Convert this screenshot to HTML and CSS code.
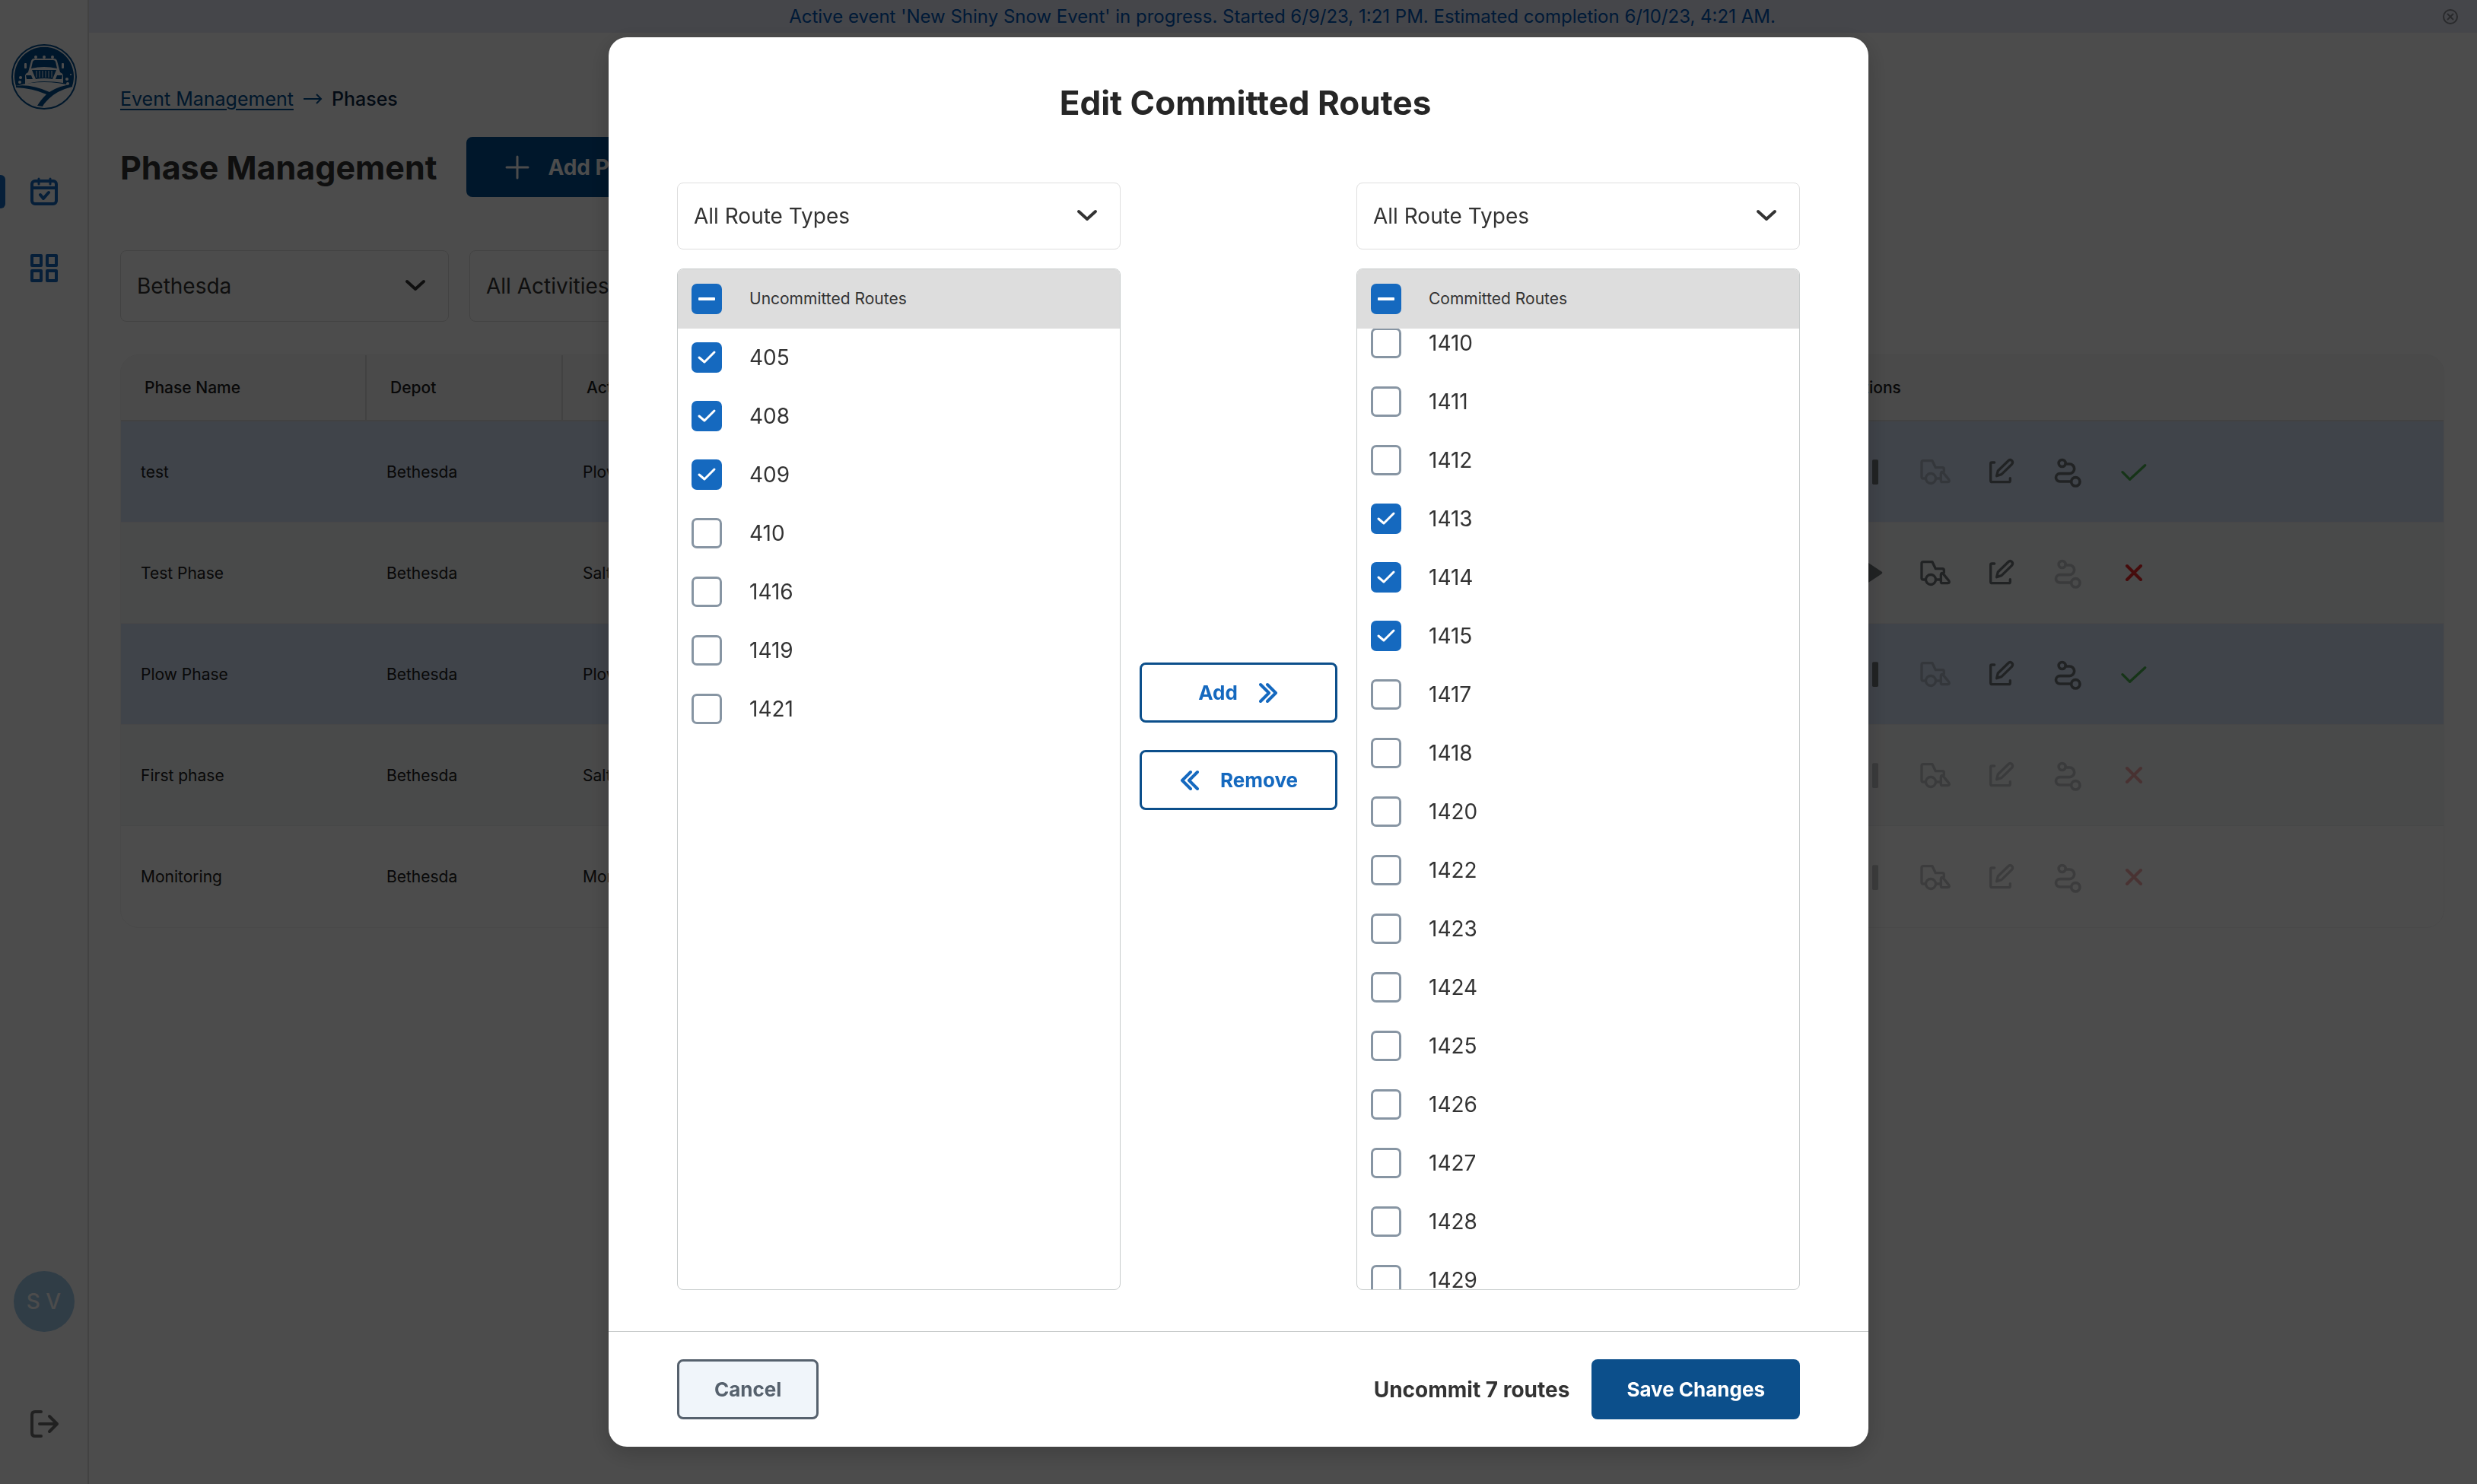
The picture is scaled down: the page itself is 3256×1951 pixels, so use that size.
FILE: index.html
```html
<!DOCTYPE html>
<html lang="en">
<head>
<meta charset="utf-8">
<title>Phase Management</title>
<link rel="stylesheet" href="styles.css">
</head>
<body>
<svg class="sprite" aria-hidden="true">
  <symbol id="pause" viewBox="-21 107 144 144"><rect x="15" y="132" width="24" height="98" rx="5" fill="currentColor"/><rect x="63" y="132" width="24" height="98" rx="5" fill="currentColor"/></symbol>
  <symbol id="play" viewBox="-21 107 144 144"><path d="M24 133Q24 125 31 129L99 174Q107 179 99 184L31 229Q24 233 24 225Z" fill="currentColor"/></symbol>
  <symbol id="truck" viewBox="241 107 144 144"><g fill="none" stroke="currentColor" stroke-width="10" stroke-linejoin="round" stroke-linecap="round"><path d="M272 206H265Q259 206 259 200V142Q259 136 265 136H301L314 163H341Q347 163 347 169V178M317 206H334"/><circle cx="295" cy="206" r="19.500"/><path d="M335 186Q336 178 342 181L366 210Q371 219 362 220H341Q335 220 335 214Z"/></g></symbol>
  <symbol id="edit" viewBox="504 107 144 144"><g fill="none" stroke="currentColor" stroke-width="10" stroke-linejoin="round" stroke-linecap="round"><path d="M548 143H538Q533 143 533 148V214Q533 220 539 220H605Q610 220 610 214V205"/><path d="M557 196L562 176L602 137Q610 129 617 136Q623 143 616 151L576 190Z"/></g></symbol>
  <symbol id="route" viewBox="756 107 144 144"><g fill="none" stroke="currentColor" stroke-width="11" stroke-linecap="round"><circle cx="806" cy="146" r="13.500"/><circle cx="859" cy="219" r="17"/><path d="M820 149H835A19 19 0 0 1 835 187H797A15.500 15.500 0 0 0 797 218H841"/></g></symbol>
  <symbol id="check" viewBox="1019 107 144 144"><path d="M1046 181L1075 210L1135 154" fill="none" stroke="currentColor" stroke-width="10" stroke-linejoin="round" stroke-linecap="round"/></symbol>
  <symbol id="cross" viewBox="0 0 144 144"><path d="M45 45L99 99M99 45L45 99" fill="none" stroke="currentColor" stroke-width="12" stroke-linecap="round"/></symbol>
  <symbol id="chevron" viewBox="0 0 28 16"><path d="M3 3L14 13L25 3" fill="none" stroke="currentColor" stroke-width="4" stroke-linecap="round" stroke-linejoin="round"/></symbol>
</svg>

<div class="app">
  <aside class="sidebar">
    <svg class="logo" viewBox="0 0 86 86">
      <circle cx="43" cy="43" r="42" fill="none" stroke="#004d8f" stroke-width="2"/>
      <path d="M6 55A39 39 0 1 1 80 55Q62 50 43 50Q24 50 6 55Z" fill="#004d8f"/>
      <path d="M18 49V41Q19 38 22 37L26 22Q27 19 30 19H56Q59 19 60 22L64 37Q67 38 68 41V51Q56 49 43 49Q30 49 18 53Z" fill="#fff"/>
      <path d="M26 32L28 23Q29 21 31 21H55Q57 21 58 23L60 32Q43 28 26 32Z" fill="#004d8f"/>
      <path d="M27 34H59L54 46Q43 44 32 46Z" fill="#004d8f"/>
      <path d="M33 35V44M37 35V44M41 35V44M45 35V44M49 35V44M53 35V44" stroke="#fff" stroke-width="1"/>
      <path d="M19 41H26L28 46H20ZM67 41H60L58 46H66Z" fill="#004d8f"/>
      <g fill="#fff"><circle cx="32" cy="17" r="2"/><circle cx="43" cy="17" r="2"/><circle cx="54" cy="17" r="2"/><rect x="17" y="25" width="3" height="7" rx="1"/><rect x="66" y="25" width="3" height="7" rx="1"/><circle cx="12" cy="44" r="2"/><circle cx="11" cy="50" r="2"/><circle cx="73" cy="46" r="2"/><circle cx="78" cy="40" r="1"/><circle cx="74" cy="52" r="2"/></g>
      <path d="M6 55Q25 52 50 63Q64 54 80 53V56Q60 61 49 72Q42 79 41 82L34 81Q38 74 46 66Q28 58 6 57Z" fill="#004d8f"/>
    </svg>
    <nav class="nav">
      <a class="nav-item active" href="#" aria-current="page"><svg width="40" height="40" viewBox="0 0 40 40"><g fill="none" stroke="currentColor" stroke-width="4" stroke-linecap="round" stroke-linejoin="round"><rect x="4" y="6" width="32" height="30" rx="4"/><path d="M5 15H35" stroke-linecap="butt"/><path d="M13 3V10M28 3V10" stroke-width="3"/><path d="M15 24L19 29L26 21"/></g></svg></a>
      <a class="nav-item" href="#"><svg width="40" height="40" viewBox="0 0 40 40"><g fill="none" stroke="currentColor" stroke-width="4" stroke-linejoin="round"><rect x="4" y="4" width="12" height="13"/><rect x="24" y="4" width="12" height="13"/><rect x="4" y="24" width="12" height="13"/><rect x="24" y="24" width="12" height="13"/></g></svg></a>
    </nav>
    <div class="account">
      <span class="avatar">S V</span>
      <button class="logout" type="button"><svg width="40" height="40" viewBox="0 0 40 40"><path d="M16 4H8Q4 4 4 8V32Q4 36 8 36H16M14 20H36M27 10L37 20L27 30" fill="none" stroke="currentColor" stroke-width="4" stroke-linecap="round" stroke-linejoin="round"/></svg></button>
    </div>
  </aside>

  <div class="page">
    <div class="banner">
      <p>Active event 'New Shiny Snow Event' in progress. Started 6/9/23, 1:21 PM. Estimated completion 6/10/23, 4:21 AM.</p>
      <button class="banner-close" type="button"><svg width="22" height="22" viewBox="0 0 22 22"><g fill="none" stroke="currentColor" stroke-width="2"><circle cx="11" cy="11" r="9"/><path d="M7 7L15 15M15 7L7 15"/></g></svg></button>
    </div>
    <main class="content">
      <nav class="crumbs"><a href="#">Event Management</a><svg width="26" height="16" viewBox="0 0 26 16"><path d="M1 8H24M18 2L24 8L18 14" fill="none" stroke="currentColor" stroke-width="2"/></svg><span>Phases</span></nav>
      <div class="heading">
        <h1>Phase Management</h1>
        <button class="btn btn-primary btn-add" type="button"><svg width="32" height="32" viewBox="0 0 32 32"><path d="M16 2V30M2 16H30" stroke="currentColor" stroke-width="3" stroke-linecap="round"/></svg>Add Phase</button>
      </div>
      <div class="filters">
        <div class="select"><select aria-label="Depot"><option>Bethesda</option></select><svg class="chevron"><use href="#chevron"/></svg></div>
        <div class="select"><select aria-label="Activity"><option>All Activities</option></select><svg class="chevron"><use href="#chevron"/></svg></div>
      </div>
      <table class="phases">
        <colgroup><col class="c-name"><col class="c-depot"><col><col class="c-actions"></colgroup>
        <thead><tr><th>Phase Name</th><th>Depot</th><th>Activity</th><th>Actions</th></tr></thead>
        <tbody>
          <tr class="running"><td>test</td><td>Bethesda</td><td>Plow</td><td><div class="actions">
            <button type="button"><svg><use href="#pause"/></svg></button><button type="button" disabled><svg><use href="#truck"/></svg></button><button type="button"><svg><use href="#edit"/></svg></button><button type="button"><svg><use href="#route"/></svg></button><button class="ok" type="button"><svg><use href="#check"/></svg></button></div></td></tr>
          <tr class="idle"><td>Test Phase</td><td>Bethesda</td><td>Salt</td><td><div class="actions">
            <button type="button"><svg><use href="#play"/></svg></button><button type="button"><svg><use href="#truck"/></svg></button><button type="button"><svg><use href="#edit"/></svg></button><button type="button" disabled><svg><use href="#route"/></svg></button><button class="bad" type="button"><svg><use href="#cross"/></svg></button></div></td></tr>
          <tr class="running"><td>Plow Phase</td><td>Bethesda</td><td>Plow</td><td><div class="actions">
            <button type="button"><svg><use href="#pause"/></svg></button><button type="button" disabled><svg><use href="#truck"/></svg></button><button type="button"><svg><use href="#edit"/></svg></button><button type="button"><svg><use href="#route"/></svg></button><button class="ok" type="button"><svg><use href="#check"/></svg></button></div></td></tr>
          <tr class="idle"><td>First phase</td><td>Bethesda</td><td>Salt</td><td><div class="actions">
            <button type="button" disabled><svg><use href="#pause"/></svg></button><button type="button" disabled><svg><use href="#truck"/></svg></button><button type="button" disabled><svg><use href="#edit"/></svg></button><button type="button" disabled><svg><use href="#route"/></svg></button><button class="bad" type="button" disabled><svg><use href="#cross"/></svg></button></div></td></tr>
          <tr><td>Monitoring</td><td>Bethesda</td><td>Monitoring</td><td><div class="actions">
            <button type="button" disabled><svg><use href="#pause"/></svg></button><button type="button" disabled><svg><use href="#truck"/></svg></button><button type="button" disabled><svg><use href="#edit"/></svg></button><button type="button" disabled><svg><use href="#route"/></svg></button><button class="bad" type="button" disabled><svg><use href="#cross"/></svg></button></div></td></tr>
        </tbody>
      </table>
    </main>
  </div>
</div>

<div class="backdrop">
  <section class="modal" role="dialog" aria-modal="true" aria-labelledby="modal-title">
    <h2 id="modal-title">Edit Committed Routes</h2>
    <div class="transfer">
      <div class="column">
        <div class="select"><select aria-label="All Route Types"><option>All Route Types</option></select><svg class="chevron"><use href="#chevron"/></svg></div>
        <div class="routes">
          <label class="route-row route-head"><input type="checkbox" class="partial">Uncommitted Routes</label>
          <ul>
            <li><label class="route-row"><input type="checkbox" checked>405</label></li>
            <li><label class="route-row"><input type="checkbox" checked>408</label></li>
            <li><label class="route-row"><input type="checkbox" checked>409</label></li>
            <li><label class="route-row"><input type="checkbox">410</label></li>
            <li><label class="route-row"><input type="checkbox">1416</label></li>
            <li><label class="route-row"><input type="checkbox">1419</label></li>
            <li><label class="route-row"><input type="checkbox">1421</label></li>
          </ul>
        </div>
      </div>
      <div class="moves">
        <button class="btn btn-outline" type="button">Add<svg width="26" height="28" viewBox="0 0 26 28"><path d="M2 3L13 14L2 25M11 3L22 14L11 25" fill="none" stroke="currentColor" stroke-width="4" stroke-linecap="round" stroke-linejoin="round"/></svg></button>
        <button class="btn btn-outline" type="button"><svg width="26" height="28" viewBox="0 0 26 28"><path d="M24 3L13 14L24 25M15 3L4 14L15 25" fill="none" stroke="currentColor" stroke-width="4" stroke-linecap="round" stroke-linejoin="round"/></svg>Remove</button>
      </div>
      <div class="column">
        <div class="select"><select aria-label="All Route Types"><option>All Route Types</option></select><svg class="chevron"><use href="#chevron"/></svg></div>
        <div class="routes">
          <label class="route-row route-head"><input type="checkbox" class="partial">Committed Routes</label>
          <ul id="committed">
            <li><label class="route-row"><input type="checkbox">1410</label></li>
            <li><label class="route-row"><input type="checkbox">1411</label></li>
            <li><label class="route-row"><input type="checkbox">1412</label></li>
            <li><label class="route-row"><input type="checkbox" checked>1413</label></li>
            <li><label class="route-row"><input type="checkbox" checked>1414</label></li>
            <li><label class="route-row"><input type="checkbox" checked>1415</label></li>
            <li><label class="route-row"><input type="checkbox">1417</label></li>
            <li><label class="route-row"><input type="checkbox">1418</label></li>
            <li><label class="route-row"><input type="checkbox">1420</label></li>
            <li><label class="route-row"><input type="checkbox">1422</label></li>
            <li><label class="route-row"><input type="checkbox">1423</label></li>
            <li><label class="route-row"><input type="checkbox">1424</label></li>
            <li><label class="route-row"><input type="checkbox">1425</label></li>
            <li><label class="route-row"><input type="checkbox">1426</label></li>
            <li><label class="route-row"><input type="checkbox">1427</label></li>
            <li><label class="route-row"><input type="checkbox">1428</label></li>
            <li><label class="route-row"><input type="checkbox">1429</label></li>
          </ul>
        </div>
      </div>
    </div>
    <footer class="modal-footer">
      <button class="btn btn-muted" type="button">Cancel</button>
      <strong>Uncommit 7 routes</strong>
      <button class="btn btn-primary" type="button">Save Changes</button>
    </footer>
  </section>
</div>
<script src="app.js"></script>
</body>
</html>
```
FILE: styles.css
```css
*, *::before, *::after { box-sizing: border-box; }

:root {
  --navy: #0c4f8b;
  --blue: #1569bf;
  --text: #333333;
}

body {
  margin: 0;
  font-family: Inter, "Liberation Sans", sans-serif;
  font-size: 28px;
  color: var(--text);
  background: #ffffff;
}

h1, h2, p, ul { margin: 0; padding: 0; }
ul { list-style: none; }
button, select, input { font: inherit; color: inherit; margin: 0; }
button { border: 0; padding: 0; background: none; }
svg { display: block; flex: none; }
.sprite { position: absolute; width: 0; height: 0; }

.app { display: flex; min-height: 100vh; }

/* Sidebar */
.sidebar {
  flex: none;
  width: 117px;
  padding: 58px 0 59px;
  border-right: 2px solid #dcdcdc;
  display: flex;
  flex-direction: column;
  align-items: center;
}
.logo { width: 86px; height: 86px; }
.nav { width: 100%; margin-top: 86px; display: flex; flex-direction: column; gap: 56px; }
.nav-item {
  position: relative;
  height: 44px;
  display: flex;
  align-items: center;
  justify-content: center;
  color: var(--blue);
}
.nav-item.active::before {
  content: "";
  position: absolute;
  left: 0;
  top: 0;
  width: 7px;
  height: 44px;
  border-radius: 0 6px 6px 0;
  background: var(--blue);
}
.account { margin-top: auto; display: flex; flex-direction: column; align-items: center; gap: 101px; }
.avatar {
  width: 80px;
  height: 80px;
  border-radius: 50%;
  display: flex;
  align-items: center;
  justify-content: center;
  background: #a0cbec;
  color: #ffffff;
  font-weight: 500;
}
.logout { color: #707070; }

/* Page */
.page { flex: 1; min-width: 0; }
.banner {
  height: 43px;
  padding: 0 24px;
  display: flex;
  align-items: center;
  background: #e6e9f7;
  color: #0057b8;
  font-size: 24px;
}
.banner p { flex: 1; padding-left: 20px; text-align: center; }
.banner-close { color: #8a8c94; }
.content { padding: 71px 43px 0 41px; }
.crumbs { display: flex; align-items: center; gap: 12px; height: 32px; font-size: 25px; color: #0b2545; }
.crumbs a { color: #004d8f; text-underline-offset: 4px; text-decoration-thickness: 2px; }
.crumbs svg { color: #004d8f; }
.crumbs span { font-weight: 500; }
.heading { display: flex; align-items: center; gap: 39px; margin-top: 34px; }
h1 { font-size: 43px; line-height: 48px; }
.filters { display: flex; gap: 27px; margin-top: 70px; }
.filters .select { width: 432px; height: 94px; }

/* Shared controls */
.btn {
  height: 79px;
  border-radius: 8px;
  display: flex;
  align-items: center;
  justify-content: center;
  font-size: 26px;
  font-weight: 700;
  white-space: nowrap;
}
.btn-primary { padding: 0 46px; background: var(--navy); color: #ffffff; }
.btn-add { gap: 24px; padding: 0 51px; background: #004d8f; font-size: 28px; }
.btn-outline { border: 3px solid var(--navy); color: var(--blue); gap: 28px; }
.btn-muted { padding: 0 46px; border: 3px solid #56616d; background: #f0f5fa; color: #56616d; }

.select { position: relative; }
.select select {
  width: 100%;
  height: 100%;
  padding: 0 64px 0 21px;
  appearance: none;
  border: 1px solid #dedede;
  border-radius: 8px;
  background: #ffffff;
}
.chevron { position: absolute; right: 30px; top: 50%; width: 28px; height: 16px; margin-top: -9px; pointer-events: none; }

/* Phase table */
.phases {
  width: 100%;
  margin-top: 43px;
  table-layout: fixed;
  border-collapse: separate;
  border-spacing: 0;
  border: 1px solid #f4f4f4;
  border-radius: 24px;
  overflow: hidden;
  font-size: 21px;
  color: #202020;
}
.c-name { width: 323px; }
.c-depot { width: 258px; }
.c-actions { width: 823px; }
.phases th {
  height: 87px;
  padding: 0 31px;
  text-align: left;
  font-weight: 500;
  background: #f7f7f7;
  border-bottom: 2px solid #dcdcdc;
  border-right: 2px solid #dcdcdc;
}
.phases th:last-child { padding-left: 34px; border-right: 0; }
.phases td { height: 133px; padding: 0 26px; border-bottom: 1px solid #efeff0; }
.running td { background: #d6e3f8; }
.idle td { background: #f6f7f9; }
.phases td:last-child { padding: 0 20px 0 44px; }
.phases tr:last-child td { border-bottom: 0; }
.actions { display: flex; gap: 39px; color: #717679; }
.actions svg { width: 48px; height: 48px; }
.actions button:disabled { opacity: 0.38; }
.actions .ok { color: #4cb050; }
.actions .bad { color: #e92828; }

/* Modal */
.backdrop {
  position: fixed;
  inset: 0;
  display: flex;
  align-items: center;
  justify-content: center;
  background: rgba(0, 0, 0, 0.7);
}
.modal {
  width: 100%;
  max-width: 1656px;
  height: 95vh;
  display: flex;
  flex-direction: column;
  border-radius: 24px;
  background: #ffffff;
  box-shadow: 0 8px 32px rgba(0, 0, 0, 0.2);
}
h2 { padding: 58px 72px 77px 90px; font-size: 44px; line-height: 56px; text-align: center; color: #262626; }
.transfer { flex: 1; min-height: 0; padding: 0 90px 54px; display: flex; gap: 25px; }
.column { flex: 1; min-width: 0; display: flex; flex-direction: column; gap: 25px; }
.column .select { height: 88px; }
.routes {
  flex: 1;
  min-height: 0;
  display: flex;
  flex-direction: column;
  border: 1px solid #c8cccc;
  border-radius: 8px;
  overflow: hidden;
}
.routes ul { flex: 1; min-height: 0; overflow-y: auto; scrollbar-width: none; }
.route-row { display: flex; align-items: center; gap: 36px; height: 77px; padding: 0 18px; }
.route-head { flex: none; height: 78px; background: #dddddd; font-size: 21px; }
input[type="checkbox"] {
  flex: none;
  appearance: none;
  width: 40px;
  height: 40px;
  border: 3px solid #8795a3;
  border-radius: 7px;
  background: #ffffff center / 40px 40px no-repeat;
}
input[type="checkbox"]:checked {
  border: 0;
  background-color: var(--blue);
  background-image: url("data:image/svg+xml,%3Csvg xmlns='http://www.w3.org/2000/svg' viewBox='0 0 40 40'%3E%3Cpath d='M10 20L17 26L30 13' fill='none' stroke='white' stroke-width='3' stroke-linecap='round' stroke-linejoin='round'/%3E%3C/svg%3E");
}
input[type="checkbox"]:indeterminate {
  border: 0;
  background-color: var(--blue);
  background-image: url("data:image/svg+xml,%3Csvg xmlns='http://www.w3.org/2000/svg' viewBox='0 0 40 40'%3E%3Crect x='9' y='18' width='22' height='4' rx='1' fill='white'/%3E%3C/svg%3E");
}
.moves { flex: none; width: 260px; display: flex; flex-direction: column; justify-content: center; gap: 36px; }
.modal-footer {
  flex: none;
  display: flex;
  align-items: center;
  gap: 29px;
  padding: 36px 90px;
  border-top: 1px solid #c8cccc;
}
.modal-footer strong { margin-left: auto; }
```
FILE: app.js
```js
document.querySelectorAll(".partial").forEach((box) => {
  box.indeterminate = true;
});
document.getElementById("committed").scrollTop = 19;
```
